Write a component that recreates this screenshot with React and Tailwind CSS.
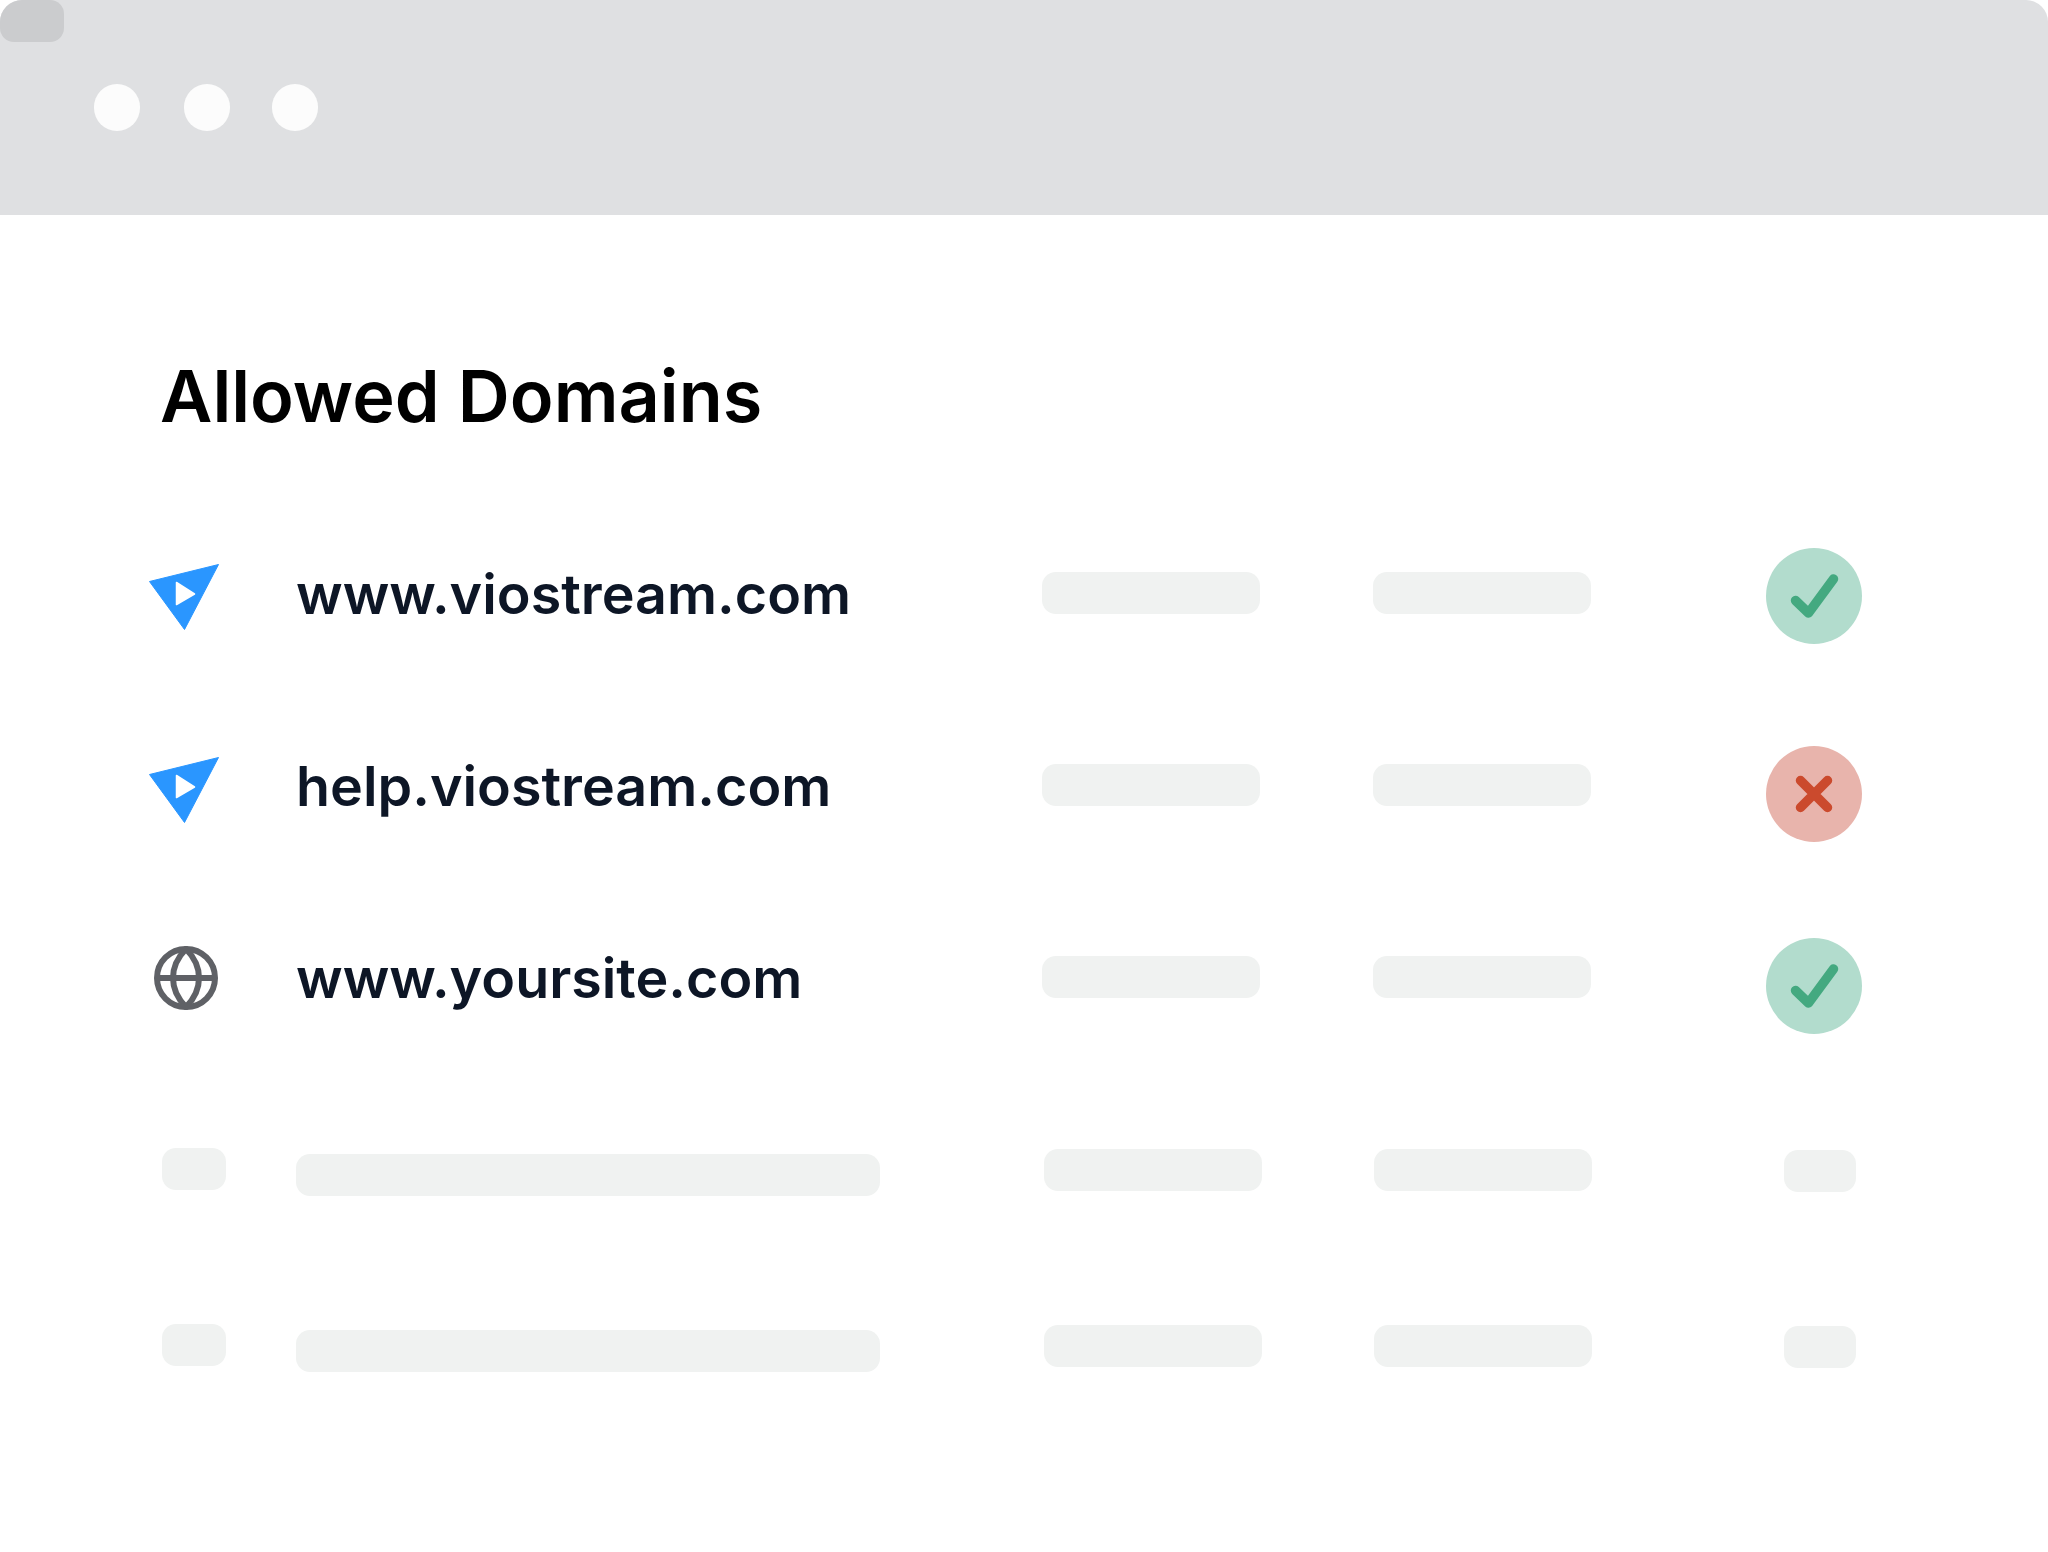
const font = { fontFamily: 'Inter, sans-serif' };

function Logo() {
  return (
    <svg width="72" height="68" viewBox="0 0 72 68" className="block">
      <path d="M1.5 18.5 L70.5 1.5 L36.5 66.5 Z" fill="#2a96ff" stroke="#2a96ff" strokeWidth="1" strokeLinejoin="round" />
      <path d="M28.5 19.5 L46.5 31 L28.5 41.5 Z" fill="#ffffff" stroke="#ffffff" strokeWidth="1.5" strokeLinejoin="round" />
    </svg>
  );
}

function Globe() {
  return (
    <svg width="64" height="64" viewBox="0 0 64 64" fill="none" stroke="#5f6166" strokeWidth="6" className="block">
      <circle cx="32" cy="32" r="29" />
      <path d="M32 3 C22 13 19 23 19 32 C19 41 22 51 32 61 C42 51 45 41 45 32 C45 23 42 13 32 3 Z" />
      <path d="M3 32 H61" />
    </svg>
  );
}

function Check() {
  return (
    <div className="flex h-[96px] w-[96px] items-center justify-center rounded-full bg-[#b2dccd]">
      <svg width="96" height="96" viewBox="0 0 96 96" fill="none" stroke="#44a980" strokeWidth="9.5" strokeLinecap="round" strokeLinejoin="round">
        <path d="M29.5 52.5 L42.5 65 L67.5 31" />
      </svg>
    </div>
  );
}

function Cross() {
  return (
    <div className="flex h-[96px] w-[96px] items-center justify-center rounded-full bg-[#e8b4ac]">
      <svg width="96" height="96" viewBox="0 0 96 96" fill="none" stroke="#cb4a2d" strokeWidth="9.5" strokeLinecap="round">
        <path d="M34.5 34.5 L61.5 61.5 M61.5 34.5 L34.5 61.5" />
      </svg>
    </div>
  );
}

function Pill({ className }) {
  return <div className={`rounded-[14px] bg-[#f0f2f1] ${className}`} />;
}

function DomainRow({ logo, logoClass, text, status, statusClass, className }) {
  return (
    <div className={`flex h-[96px] items-center ${className}`}>
      <div className={`flex w-[148px] shrink-0 items-center ${logoClass}`}>{logo}</div>
      <div className="mt-[2px] w-[746px] shrink-0 text-[55.6px] font-semibold leading-none text-[#0d1626]">{text}</div>
      <Pill className="h-[42px] w-[218px] shrink-0" />
      <Pill className="ml-[113px] h-[42px] w-[218px] shrink-0" />
      <div className={`ml-[175px] shrink-0 ${statusClass}`}>{status}</div>
    </div>
  );
}

function SkeletonRow({ className }) {
  return (
    <div className={`flex items-start ${className}`}>
      <Pill className="ml-[162px] h-[42px] w-[64px] shrink-0" />
      <Pill className="ml-[70px] mt-[6px] h-[42px] w-[584px] shrink-0" />
      <Pill className="ml-[164px] mt-[1px] h-[42px] w-[218px] shrink-0" />
      <Pill className="ml-[112px] mt-[1px] h-[42px] w-[218px] shrink-0" />
      <Pill className="ml-[192px] mt-[2px] h-[42px] w-[72px] shrink-0" />
    </div>
  );
}

export default function App() {
  return (
    <div className="h-[1552px] w-[2048px] overflow-hidden rounded-[22px] bg-white" style={font}>
      <div className="relative flex h-[215px] items-start bg-[#dfe0e2]">
        <div className="absolute left-0 top-0 h-[42px] w-[64px] rounded-[14px] bg-[#cbccce]" />
        <div className="ml-[94px] mt-[84px] h-[47px] w-[46px] rounded-full bg-[#fcfcfc]" />
        <div className="ml-[44px] mt-[84px] h-[47px] w-[46px] rounded-full bg-[#fcfcfc]" />
        <div className="ml-[42px] mt-[84px] h-[47px] w-[46px] rounded-full bg-[#fcfcfc]" />
      </div>
      <h1 className="ml-[160px] mt-[137px] text-[72px] font-semibold leading-[88px] text-black">Allowed Domains</h1>
      <DomainRow className="mt-[105px]" logo={<Logo />} logoClass="ml-[148px] mt-[8px]" text="www.viostream.com" status={<Check />} statusClass="mt-[6px]" />
      <DomainRow className="mt-[96px]" logo={<Logo />} logoClass="ml-[148px] mt-[10px]" text="help.viostream.com" status={<Cross />} statusClass="mt-[18px]" />
      <DomainRow className="mt-[96px]" logo={<Globe />} logoClass="ml-[154px] mr-[-6px] mt-[2px]" text="www.yoursite.com" status={<Check />} statusClass="mt-[18px]" />
      <SkeletonRow className="mt-[123px]" />
      <SkeletonRow className="mt-[128px]" />
    </div>
  );
}
